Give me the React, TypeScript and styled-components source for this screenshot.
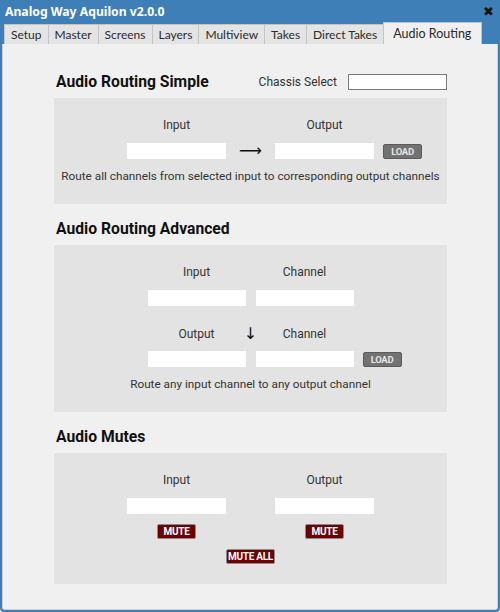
import React from "react";
import styled, { createGlobalStyle } from "styled-components";

const Global = createGlobalStyle`
  html, body { margin: 0; padding: 0; }
  body { width: 500px; height: 612px; overflow: hidden; background: #ffffff; }
  * { box-sizing: border-box; }
`;

const Window = styled.div`
  width: 500px;
  height: 612px;
  background: #3f7fb8;
  display: flex;
  flex-direction: column;
  padding: 0 2px 2px 2px;
  border-radius: 0 0 4px 4px;
`;

const TitleBar = styled.div`
  height: 22px;
  display: flex;
  align-items: center;
  justify-content: space-between;
  padding: 0 4px 0 3px;
  color: #ffffff;
  font-family: "Noto Sans", "Open Sans", sans-serif;
  font-weight: 700;
  font-size: 12.2px;
`;

const Close = styled.span`
  color: #111;
  font-family: "DejaVu Sans", sans-serif;
  font-size: 13px;
  line-height: 1;
`;

const TabBar = styled.div`
  height: 22px;
  display: flex;
  align-items: flex-end;
  padding-left: 2px;
`;

const Tab = styled.div<{ $active?: boolean }>`
  height: ${(p) => (p.$active ? "22px" : "20px")};
  padding: ${(p) => (p.$active ? "0 10px 0 9px" : "0 6px")};
  display: flex;
  align-items: center;
  background: ${(p) => (p.$active ? "#f0f0f0" : "#e4e4e4")};
  border: 1px solid #c4c4c4;
  border-bottom: none;
  margin-right: -1px;
  color: #2a2a2a;
  font-family: "Lato", "Open Sans", sans-serif;
  font-size: ${(p) => (p.$active ? "12.5px" : "12px")};
  white-space: nowrap;
`;

const Content = styled.div`
  flex: 1;
  background: #f0f0f0;
  border: 1px solid #d0d0d0;
  border-top: none;
  border-radius: 0 0 3px 3px;
  padding-top: 13px;
  font-family: "Roboto", "Liberation Sans", sans-serif;
`;

const Section = styled.section`
  width: 393px;
  margin-left: 51px;
`;

const HeadRow = styled.div`
  display: flex;
  align-items: center;
  justify-content: space-between;
  height: 24px;
  margin: 13px 0 4px 0;
`;

const SectionTitle = styled.h2`
  margin: 0 0 0 2px;
  font-size: 15.7px;
  font-weight: 700;
  color: #111;
  line-height: 24px;
`;

const Chassis = styled.label`
  display: flex;
  align-items: center;
  gap: 11px;
  font-size: 12px;
  color: #333;
`;

const ChassisInput = styled.input`
  width: 99px;
  height: 16px;
  border: 1px solid #7a7a7a;
  background: #fff;
  padding: 0;
  margin: 0;
`;

const Panel = styled.div`
  background: #e3e3e3;
  padding: 19px 0 20px;
`;

const Grid = styled.div<{ $cols: string }>`
  display: grid;
  grid-template-columns: ${(p) => p.$cols};
  align-items: center;
`;

const Label = styled.div<{ $col: number }>`
  grid-column: ${(p) => p.$col};
  text-align: center;
  font-size: 12px;
  line-height: 16px;
  color: #333;
`;

const Field = styled.input<{ $col: number }>`
  grid-column: ${(p) => p.$col};
  width: 100%;
  height: 16px;
  border: none;
  background: #fff;
  padding: 0;
  margin: 0;
`;

const Arrow = styled.div<{ $col: number }>`
  grid-column: ${(p) => p.$col};
  justify-self: center;
  font-family: "DejaVu Sans", sans-serif;
  font-size: 16px;
  line-height: 16px;
  color: #111;
`;

const Spacer = styled.div<{ $h: number }>`
  grid-column: 1 / -1;
  height: ${(p) => p.$h}px;
`;

const Btn = styled.button<{ $col: string; $kind: "load" | "mute"; $w: number }>`
  grid-column: ${(p) => p.$col};
  justify-self: ${(p) => (p.$kind === "load" ? "start" : "center")};
  margin-left: ${(p) => (p.$kind === "load" ? "9px" : "0")};
  width: ${(p) => p.$w}px;
  height: 15px;
  padding: 0;
  border-radius: 2px;
  border: 1px solid ${(p) => (p.$kind === "load" ? "#5a5a5a" : "#8a8a8a")};
  background: ${(p) => (p.$kind === "load" ? "#727272" : "#6b0000")};
  color: ${(p) => (p.$kind === "load" ? "#e6e6e6" : "#ffffff")};
  font-family: "Roboto", "Liberation Sans", sans-serif;
  font-weight: 700;
  font-size: ${(p) => (p.$kind === "load" ? "9.5px" : "10px")};
  line-height: 13px;
  letter-spacing: -0.3px;
  white-space: nowrap;
`;

const Desc = styled.p`
  margin: 9px 0 0;
  text-align: center;
  font-size: 11.75px;
  line-height: 16px;
  color: #333;
  white-space: nowrap;
`;

const tabs = ["Setup", "Master", "Screens", "Layers", "Multiview", "Takes", "Direct Takes", "Audio Routing"];

export default function App() {
  return (
    <>
      <Global />
      <Window>
        <TitleBar>
          <span>Analog Way Aquilon v2.0.0</span>
          <Close>✖</Close>
        </TitleBar>
        <TabBar>
          {tabs.map((t) => (
            <Tab key={t} $active={t === "Audio Routing"}>
              {t}
            </Tab>
          ))}
        </TabBar>
        <Content>
          <Section>
            <HeadRow>
              <SectionTitle>Audio Routing Simple</SectionTitle>
              <Chassis>
                Chassis Select
                <ChassisInput />
              </Chassis>
            </HeadRow>
            <Panel>
              <Grid $cols="1fr 99px 49px 99px 1fr">
                <Label $col={2}>Input</Label>
                <Label $col={4}>Output</Label>
                <Spacer $h={10} />
                <Field $col={2} />
                <Arrow $col={3}>⟶</Arrow>
                <Field $col={4} />
                <Btn $col="5" $kind="load" $w={39}>LOAD</Btn>
              </Grid>
              <Desc>Route all channels from selected input to corresponding output channels</Desc>
            </Panel>
          </Section>

          <Section>
            <HeadRow>
              <SectionTitle>Audio Routing Advanced</SectionTitle>
            </HeadRow>
            <Panel>
              <Grid $cols="1fr 98px 10px 98px 1fr">
                <Label $col={2}>Input</Label>
                <Label $col={4}>Channel</Label>
                <Spacer $h={10} />
                <Field $col={2} />
                <Field $col={4} />
                <Spacer $h={20} />
                <Label $col={2}>Output</Label>
                <Arrow $col={3}>↓</Arrow>
                <Label $col={4}>Channel</Label>
                <Spacer $h={9} />
                <Field $col={2} />
                <Field $col={4} />
                <Btn $col="5" $kind="load" $w={39}>LOAD</Btn>
              </Grid>
              <Desc>Route any input channel to any output channel</Desc>
            </Panel>
          </Section>

          <Section>
            <HeadRow>
              <SectionTitle>Audio Mutes</SectionTitle>
            </HeadRow>
            <Panel>
              <Grid $cols="1fr 99px 49px 99px 1fr">
                <Label $col={2}>Input</Label>
                <Label $col={4}>Output</Label>
                <Spacer $h={10} />
                <Field $col={2} />
                <Field $col={4} />
                <Spacer $h={10} />
                <Btn $col="2" $kind="mute" $w={39}>MUTE</Btn>
                <Btn $col="4" $kind="mute" $w={39}>MUTE</Btn>
                <Spacer $h={10} />
                <Btn $col="2 / 5" $kind="mute" $w={49}>MUTE ALL</Btn>
              </Grid>
            </Panel>
          </Section>
        </Content>
      </Window>
    </>
  );
}
